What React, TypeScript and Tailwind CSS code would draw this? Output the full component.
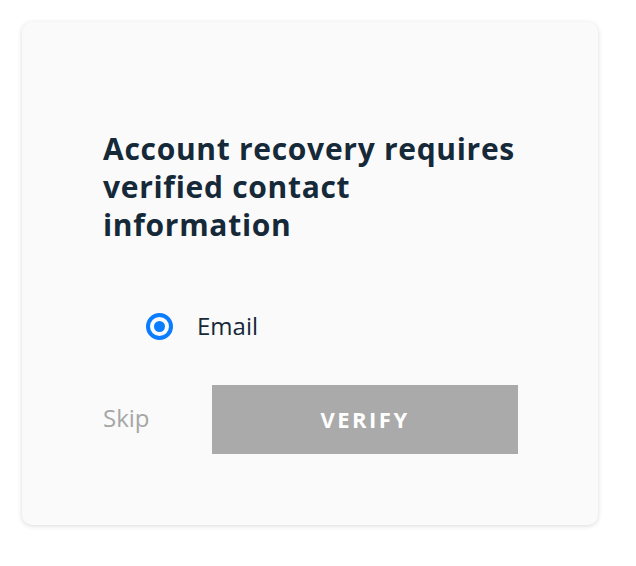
export default function App() {
  return (
    <div className="min-h-screen bg-white pt-[22px] pl-[22px] font-['Open_Sans',sans-serif]">
      <div className="w-[576px] h-[503px] rounded-[10px] bg-[#fafafa] shadow-[0_1px_5px_rgba(0,0,0,0.15)] pl-[81px] pr-[80px] pt-[108px]">
        <h1 className="text-[30px] leading-[38px] font-bold tracking-[0.7px] text-[#152939] whitespace-nowrap">
          Account recovery requires
          <br />
          verified contact
          <br />
          information
        </h1>

        <label className="mt-[67px] ml-[43px] flex items-center gap-[24px] cursor-pointer">
          <span className="w-[27px] h-[27px] rounded-full border-[4px] border-[#0a7cff] flex items-center justify-center">
            <span className="w-[11px] h-[11px] rounded-full bg-[#0a7cff]" />
          </span>
          <span className="text-[24px] leading-[30px] text-[#152939]">Email</span>
        </label>

        <div className="mt-[44px] flex items-center justify-between">
          <span className="text-[24px] leading-[30px] text-[#a6a6a6] mb-[4px]">Skip</span>
          <button className="w-[306px] h-[69px] bg-[#aaaaaa] text-white text-[22px] font-bold tracking-[2.5px]">
            VERIFY
          </button>
        </div>
      </div>
    </div>
  );
}
